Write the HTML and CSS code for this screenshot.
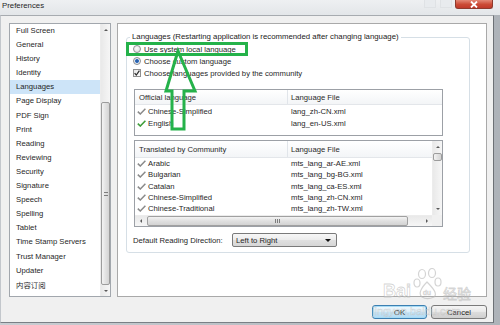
FILE: index.html
```html
<!DOCTYPE html>
<html>
<head>
<meta charset="utf-8">
<link rel="stylesheet" href="styles.css">
</head>
<body>
<div class="window">
  <div class="titlebar">
    <span class="title">Preferences</span>
    <span class="ghost first"></span><span class="ghost"></span>
    <span class="close"><svg width="10" height="7" viewBox="0 0 10 7"><path d="M2 0.5 L8 6.5 M8 0.5 L2 6.5" stroke="#fff" stroke-width="1.8"/></svg></span>
  </div>
  <div class="client">
    <div class="main">
      <div class="catlist">
        <ul class="items">
          <li>Full Screen</li>
          <li>General</li>
          <li>History</li>
          <li>Identity</li>
          <li class="sel">Languages</li>
          <li>Page Display</li>
          <li>PDF Sign</li>
          <li>Print</li>
          <li>Reading</li>
          <li>Reviewing</li>
          <li>Security</li>
          <li>Signature</li>
          <li>Speech</li>
          <li>Spelling</li>
          <li>Tablet</li>
          <li>Time Stamp Servers</li>
          <li>Trust Manager</li>
          <li>Updater</li>
          <li class="cjk">内容订阅</li>
        </ul>
        <div class="vscroll list-scroll">
          <span class="arr"><i class="tri up"></i></span>
          <span class="track"><span class="thumb"><i class="grip"></i></span></span>
          <span class="arr"><i class="tri down"></i></span>
        </div>
      </div>
      <div class="panel">
        <fieldset class="group">
          <legend>Languages (Restarting application is recommended after changing language)</legend>
          <label class="opt"><span class="radio"></span>Use system local language</label>
          <label class="opt"><span class="radio on"></span>Choose custom language</label>
          <label class="opt"><span class="check"><svg width="6" height="6" viewBox="0 0 6 6"><path d="M0.6 3.2 L2.3 5 L5.4 0.6" fill="none" stroke="#2b2b2b" stroke-width="1.2"/></svg></span>Choose languages provided by the community</label>

          <div class="tbl official">
            <div class="hdr"><span class="c1">Official language</span><span class="c2">Language File</span></div>
            <div class="row"><span class="c1"><svg class="tick" width="9" height="7" viewBox="0 0 9 7"><path d="M0.8 3.6 L3.3 6 L8.4 0.8" fill="none" stroke="#8a8a8a" stroke-width="1.5"/></svg>Chinese-Simplified</span><span class="c2">lang_zh-CN.xml</span></div>
            <div class="row"><span class="c1"><svg class="tick" width="9" height="7" viewBox="0 0 9 7"><path d="M0.8 3.6 L3.3 6 L8.4 0.8" fill="none" stroke="#3f9e3a" stroke-width="1.6"/></svg>English</span><span class="c2">lang_en-US.xml</span></div>
          </div>

          <div class="tbl community">
            <div class="body">
              <div class="hdr"><span class="c1">Translated by Community</span><span class="c2">Language File</span></div>
              <div class="row"><span class="c1"><svg class="tick" width="9" height="7" viewBox="0 0 9 7"><path d="M0.8 3.6 L3.3 6 L8.4 0.8" fill="none" stroke="#8a8a8a" stroke-width="1.5"/></svg>Arabic</span><span class="c2">mts_lang_ar-AE.xml</span></div>
              <div class="row"><span class="c1"><svg class="tick" width="9" height="7" viewBox="0 0 9 7"><path d="M0.8 3.6 L3.3 6 L8.4 0.8" fill="none" stroke="#8a8a8a" stroke-width="1.5"/></svg>Bulgarian</span><span class="c2">mts_lang_bg-BG.xml</span></div>
              <div class="row"><span class="c1"><svg class="tick" width="9" height="7" viewBox="0 0 9 7"><path d="M0.8 3.6 L3.3 6 L8.4 0.8" fill="none" stroke="#8a8a8a" stroke-width="1.5"/></svg>Catalan</span><span class="c2">mts_lang_ca-ES.xml</span></div>
              <div class="row"><span class="c1"><svg class="tick" width="9" height="7" viewBox="0 0 9 7"><path d="M0.8 3.6 L3.3 6 L8.4 0.8" fill="none" stroke="#8a8a8a" stroke-width="1.5"/></svg>Chinese-Simplified</span><span class="c2">mts_lang_zh-CN.xml</span></div>
              <div class="row"><span class="c1"><svg class="tick" width="9" height="7" viewBox="0 0 9 7"><path d="M0.8 3.6 L3.3 6 L8.4 0.8" fill="none" stroke="#8a8a8a" stroke-width="1.5"/></svg>Chinese-Traditional</span><span class="c2">mts_lang_zh-TW.xml</span></div>
            </div>
            <div class="vscroll tbl-scroll">
              <span class="arr"><i class="tri up"></i></span>
              <span class="track"><span class="thumb small"></span></span>
              <span class="arr"><i class="tri down"></i></span>
            </div>
            <div class="hscroll">
              <span class="harr"><i class="tri left"></i></span>
              <span class="htrack"><span class="hthumb"><i class="hgrip"></i></span></span>
              <span class="harr"><i class="tri right"></i></span>
            </div>
            <div class="corner"></div>
          </div>

          <div class="direction">
            <span class="dlabel">Default Reading Direction:</span>
            <span class="combo"><span>Left to Right</span><i class="tri down dark"></i></span>
          </div>
        </fieldset>
      </div>
    </div>
    <div class="buttons">
      <button class="btn default">OK</button>
      <button class="btn">Cancel</button>
    </div>
  </div>

  <svg class="annot" width="500" height="325" viewBox="0 0 500 325">
    <rect x="127.5" y="43.5" width="119" height="11" fill="none" stroke="#25b24a" stroke-width="3"/>
    <polygon points="178,51 195,91 184,91 184,129 172,129 172,91 166,91" fill="none" stroke="#25b24a" stroke-width="3" stroke-linejoin="miter"/>
  </svg>

  <div class="watermark">
    <span class="wm-bai">Bai</span>
    <svg class="wm-paw" width="30" height="32" viewBox="0 0 30 32">
      <ellipse cx="9" cy="6" rx="3.5" ry="4.5" fill="none" stroke="#b9b9b9" stroke-width="1.2"/>
      <ellipse cx="19" cy="5" rx="3.5" ry="4.5" fill="none" stroke="#b9b9b9" stroke-width="1.2"/>
      <ellipse cx="4" cy="15" rx="3" ry="4" fill="none" stroke="#b9b9b9" stroke-width="1.2"/>
      <ellipse cx="25" cy="14" rx="3" ry="4" fill="none" stroke="#b9b9b9" stroke-width="1.2"/>
      <path d="M14 14 C8 20 5 26 9 29 C12 31 17 31 21 29 C25 26 20 20 14 14 Z" fill="none" stroke="#b9b9b9" stroke-width="1.2"/>
      <text x="10" y="27" font-size="7" fill="none" stroke="#b9b9b9" stroke-width="0.6" font-family="Liberation Sans">du</text>
    </svg>
    <span class="wm-jy">经验</span>
    <span class="wm-url">jingyan.baidu.com</span>
  </div>
</div>
</body>
</html>
```
FILE: styles.css
```css
* { box-sizing: border-box; margin: 0; padding: 0; }

body {
  width: 500px;
  height: 325px;
  overflow: hidden;
  font-family: "Liberation Sans", Arial, "Noto Sans CJK SC", sans-serif;
  font-size: 7.7px;
  color: #1f1f1f;
  background: #b8bdc3;
}

.window {
  position: relative;
  width: 500px;
  height: 325px;
  display: flex;
  flex-direction: column;
  background: linear-gradient(90deg, #c9cdd2, #aeb3b9);
}

/* title bar */
.titlebar {
  height: 15px;
  display: flex;
  align-items: flex-start;
  background: linear-gradient(#eef0f2, #e3e6e9);
}
.title {
  font-size: 7.8px;
  line-height: 10px;
  padding: 1px 0 0 2px;
  color: #1e1e1e;
}
.ghost {
  width: 12px;
  height: 8px;
  margin-left: 4px;
  border: 1px solid #dfe2e5;
  border-top: 0;
  background: #e8ebee;
}
.ghost.first { margin-left: auto; }
.close {
  width: 38px;
  height: 9px;
  margin: 0 7px 0 3px;
  display: flex;
  align-items: center;
  justify-content: center;
  background: linear-gradient(#e38876, #cb4a35 55%, #c0392a);
  border: 1px solid #8e3a2d;
  border-top: 0;
  border-radius: 0 0 3px 3px;
}

/* client area */
.client {
  flex: 1;
  display: flex;
  flex-direction: column;
  margin: 0 6px 2px 0;
  padding: 7px 6px 0 8px;
  background: #f0f0f0;
  border-top: 1px solid #a7abb0;
  border-left: 1px solid #c3c7cc;
  border-right: 1px solid #6d7176;
  border-bottom: 1px solid #7a7f85;
}
.main {
  height: 274px;
  display: flex;
  gap: 6px;
}

/* category list */
.catlist {
  width: 102px;
  display: flex;
  background: #fff;
  border: 1px solid #a2a7ad;
}
.items {
  flex: 1;
  list-style: none;
}
.items li {
  height: 14.1px;
  line-height: 14.1px;
  padding-left: 6px;
  white-space: nowrap;
}
.items li.sel { background: #cde4f8; }
.items li.cjk { font-family: "Noto Sans CJK SC", sans-serif; font-size: 7.4px; }

/* scrollbars */
.vscroll {
  width: 10px;
  display: flex;
  flex-direction: column;
  background: linear-gradient(90deg, #e9e9e9, #f6f6f6);
  border-left: 1px solid #ececec;
}
.arr, .harr {
  flex: none;
  display: flex;
  align-items: center;
  justify-content: center;
}
.arr { height: 11px; }
.harr { width: 11px; }
.track { flex: 1; display: flex; flex-direction: column; }
.thumb {
  margin-top: 67px;
  flex: 1;
  border: 1px solid #9c9c9c;
  border-radius: 2px;
  background: linear-gradient(90deg, #f3f3f3, #e2e2e2 50%, #d4d4d4);
  display: flex;
  align-items: center;
  justify-content: center;
}
.grip {
  width: 4px;
  height: 4px;
  border-top: 1px solid #7d7d7d;
  border-bottom: 1px solid #7d7d7d;
  background: linear-gradient(#fff0 40%, #7d7d7d 40%, #7d7d7d 60%, #fff0 60%);
}
.thumb.small { flex: none; height: 8px; margin-top: 1px; }

.tri { display: block; width: 0; height: 0; border: 2px solid transparent; }
.tri.up { border-bottom: 2.5px solid #5a5a5a; border-top: 0; }
.tri.down { border-top: 2.5px solid #5a5a5a; border-bottom: 0; }
.tri.left { border-right: 2.5px solid #5a5a5a; border-left: 0; }
.tri.right { border-left: 2.5px solid #5a5a5a; border-right: 0; }
.tri.dark { border-top-color: #111; border-width: 3px 3px 0 3px; }

/* right panel */
.panel {
  flex: 1;
  background: #fff;
  border: 1px solid #a9a9a9;
  padding: 8px 16px 0 8px;
}
.group {
  border: 1px solid #d6dfe6;
  border-radius: 3px;
  padding: 1px 6px 5px 6px;
  min-width: 0;
}
.group legend {
  margin-left: -3px;
  padding: 0 2px;
  line-height: 10px;
  font-size: 7.8px;
  color: #222;
}
.opt {
  height: 12px;
  display: flex;
  align-items: center;
  gap: 3px;
  white-space: nowrap;
}
.radio {
  width: 8px;
  height: 8px;
  border-radius: 50%;
  border: 1px solid #8e9093;
  background: radial-gradient(circle at 45% 40%, #fbfbfb, #d9d9d9);
}
.radio.on {
  background: radial-gradient(circle at 50% 50%, #1f4f96 0, #3b76c4 1.7px, #eef2f6 2.3px, #d9d9d9 100%);
}
.check {
  width: 8px;
  height: 8px;
  border: 1px solid #8f8f8f;
  background: linear-gradient(135deg, #e6e6e6, #fdfdfd);
  display: flex;
  align-items: center;
  justify-content: center;
}

/* tables */
.tbl {
  width: 309px;
  margin-left: 1px;
  background: #fff;
  border: 1px solid #9ca0a6;
}
.official { margin-top: 10px; height: 47px; }
.community {
  margin-top: 4px;
  display: grid;
  grid-template-columns: 1fr 10px;
  grid-template-rows: 73.5px 11px;
}
.hdr, .row {
  display: grid;
  grid-template-columns: 153px 1fr;
  white-space: nowrap;
}
.hdr {
  height: 15px;
  align-items: center;
  background: linear-gradient(#ffffff, #f3f5f7);
  border-bottom: 1px solid #e3e6ea;
  color: #2a2a2a;
}
.community .hdr { height: 17px; }
.hdr .c1 { padding-left: 4px; border-right: 1px solid #e1e5ea; height: 100%; display: flex; align-items: center; }
.hdr .c2 { padding-left: 3px; }
.row { height: 12px; align-items: center; }
.community .row { height: 11.3px; }
.row .c1 { padding-left: 2px; display: flex; align-items: center; gap: 2px; }
.row .c2 { padding-left: 3px; }
.tick { flex: none; }

.tbl-scroll { grid-column: 2; grid-row: 1; }
.hscroll {
  grid-column: 1;
  grid-row: 2;
  display: flex;
  background: linear-gradient(#e9e9e9, #f6f6f6);
  border-top: 1px solid #ececec;
}
.htrack { flex: 1; display: flex; padding: 0 0 0 1px; }
.hthumb {
  width: 261px;
  border: 1px solid #a0a0a0;
  border-radius: 2px;
  background: linear-gradient(#f3f3f3, #e0e0e0 50%, #d3d3d3);
  display: flex;
  align-items: center;
  justify-content: center;
}
.hgrip {
  width: 5px;
  height: 4px;
  border-left: 1px solid #7d7d7d;
  border-right: 1px solid #7d7d7d;
  background: linear-gradient(90deg, #fff0 40%, #7d7d7d 40%, #7d7d7d 60%, #fff0 60%);
}
.corner { grid-column: 2; grid-row: 2; background: #f0f0f0; }

/* reading direction */
.direction {
  margin-top: 6.5px;
  display: flex;
  align-items: center;
  white-space: nowrap;
}
.dlabel { width: 99px; }
.combo {
  width: 105px;
  height: 14px;
  padding: 0 5px 0 3px;
  display: flex;
  align-items: center;
  justify-content: space-between;
  border: 1px solid #7a7a7a;
  border-radius: 2px;
  background: linear-gradient(#f7f7f7, #ececec 50%, #e0e0e0 50%, #d6d6d6);
}

/* buttons */
.buttons {
  margin-top: 8px;
  display: flex;
  justify-content: flex-end;
  gap: 4px;
}
.btn {
  height: 14px;
  width: 56px;
  font-family: "Liberation Sans", Arial, sans-serif;
  font-size: 7.7px;
  color: #1f1f1f;
  border: 1px solid #7a7a7a;
  border-radius: 3px;
  background: linear-gradient(#f4f4f4, #ebebeb 45%, #dddddd 50%, #cfcfcf);
}
.btn.default {
  width: 55px;
  border-color: #3c7fb1;
  background: linear-gradient(#f0f8fd, #dff0fa 45%, #c6e6f8 50%, #b1dbf4);
  box-shadow: inset 0 0 0 1px #a7dbf5;
}

/* overlays */
.annot {
  position: absolute;
  left: 0;
  top: 0;
  pointer-events: none;
}
.watermark {
  position: absolute;
  left: 0;
  top: 0;
  width: 500px;
  height: 325px;
  pointer-events: none;
}
.wm-bai, .wm-jy, .wm-url {
  position: absolute;
  color: rgba(255, 255, 255, 0.35);
  -webkit-text-stroke: 0.8px rgba(160, 160, 160, 0.45);
  white-space: nowrap;
}
.wm-bai {
  left: 383px;
  top: 281px;
  font-size: 18px;
  font-weight: bold;
  font-family: "Liberation Sans", Arial, sans-serif;
}
.wm-paw { position: absolute; left: 413px; top: 268px; opacity: 0.6; }
.wm-jy {
  left: 443px;
  top: 283px;
  font-size: 14px;
  font-family: "Noto Sans CJK SC", sans-serif;
}
.wm-url {
  left: 372px;
  top: 305px;
  font-size: 11px;
  font-family: "Liberation Sans", Arial, sans-serif;
  -webkit-text-stroke: 0.5px rgba(170, 170, 170, 0.45);
}
```
